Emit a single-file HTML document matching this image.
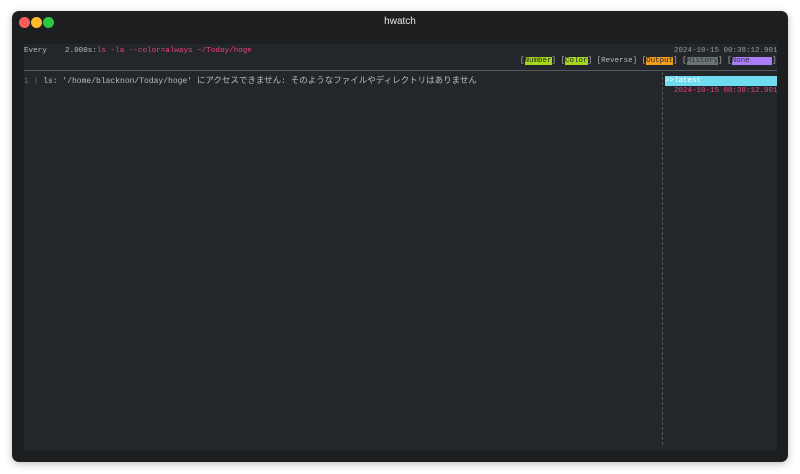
<!DOCTYPE html>
<html><head><style>
*{margin:0;padding:0;box-sizing:border-box}
body{width:800px;height:474px;background:#fff;position:relative;overflow:hidden;font-family:"Liberation Mono","Noto Sans CJK JP",monospace;font-size:7.5px;color:#c8c8c8}
.win{position:absolute;left:12px;top:11px;width:776px;height:451px;background:#1d1e20;border-radius:7px;box-shadow:0 2px 8px rgba(0,0,0,.25)}
.dot{position:absolute;top:6px;width:11px;height:11px;border-radius:50%}
.title{position:absolute;top:5px;left:0;right:0;text-align:center;font-family:"Liberation Sans",sans-serif;font-size:10px;color:#e8e8e8}
.term{position:absolute;left:12px;top:33px;width:753px;height:406px;background:#23272b}
.t{position:absolute;white-space:pre;line-height:10px}
.pk{color:#e8407a}
.hr{position:absolute;left:0;right:0;top:26px;height:1px;background:#555a5e}
.vl{position:absolute;left:638px;top:28px;bottom:5px;border-left:1px dashed #555a5e}
.j{font-size:8.5px;font-family:"Noto Sans CJK JP",sans-serif}
</style></head><body>
<div class="win">
<div class="dot" style="left:7px;background:#fe5f57"></div>
<div class="dot" style="left:19px;background:#febc2e"></div>
<div class="dot" style="left:31px;background:#28c840"></div>
<div class="title">hwatch</div>
<div class="term">
<div class="t" style="left:0;top:2px;color:#bbb;font-size:7.6px">Every    2.000s:<span class="pk">ls -la --color=always ~/Today/hoge</span></div>
<div class="t" style="left:650px;top:2px;color:#999">2024-10-15 00:38:12.901</div>
<div class="t" style="left:496px;top:12px;color:#bbb">[<span style="background:#a4d81c;color:#222">Number</span>] [<span style="background:#a4d81c;color:#222">Color</span>] [Reverse] [<span style="background:#f39c1e;color:#222">Output</span>] [<span style="background:#6b7578;color:#333">History</span>] [<span style="background:#a97df5;color:#333">None     </span>]</div>
<div class="hr"></div>
<div class="vl"></div>
<div class="t" style="left:0;top:31px;color:#bbb;font-size:8px"><span style="color:#666">1 | </span>ls: '/home/blacknon/Today/hoge' <span class="j">にアクセスできません</span>: <span class="j">そのようなファイルやディレクトリはありません</span></div>
<div class="t" style="left:641px;top:32px;width:112px;height:10px;background:#6fdcf0;color:#fff">&gt;&gt;latest</div>
<div class="t pk" style="left:650px;top:42px">2024-10-15 00:38:12.901</div>
</div>
</div>
</body></html>
